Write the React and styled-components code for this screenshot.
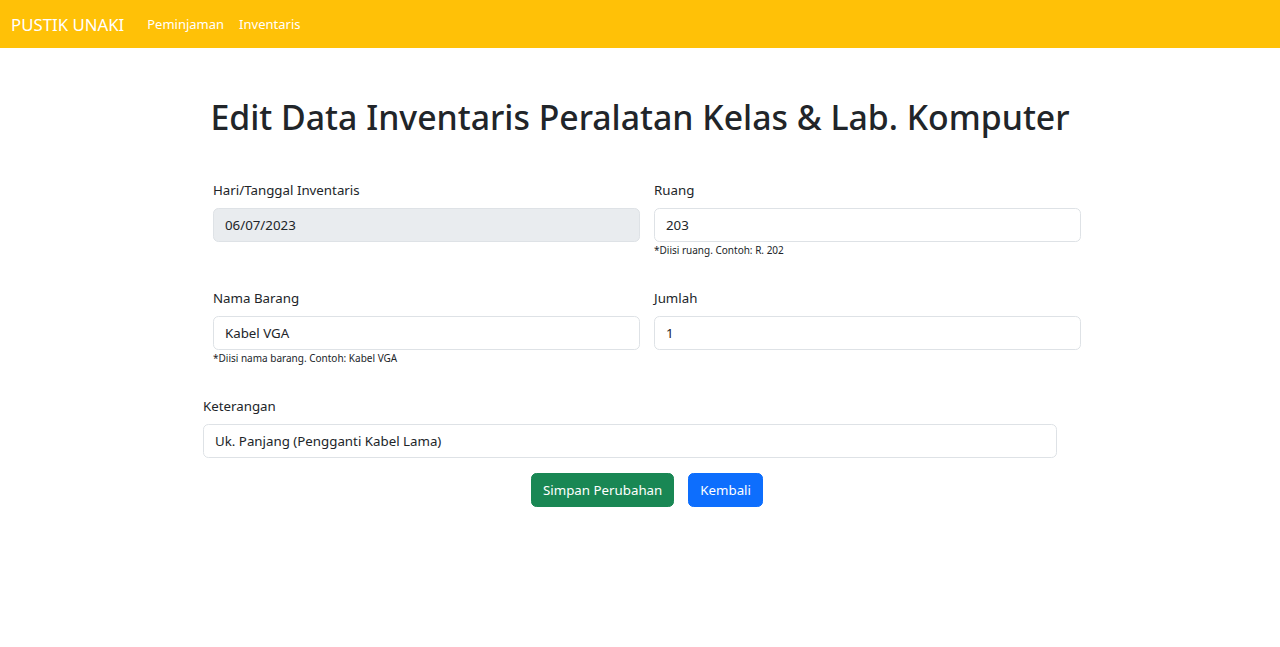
import React from 'react'
import styled, { createGlobalStyle } from 'styled-components'

const GlobalStyle = createGlobalStyle`
  * { box-sizing: border-box; }
  body {
    margin: 0;
    background: #fff;
    color: #212529;
    font-family: "Noto Sans", "Open Sans", sans-serif;
    font-size: 13.3px;
  }
`

const Navbar = styled.nav`
  height: 48px;
  background: #ffc107;
  display: flex;
  align-items: center;
  padding: 0 11px;
`

const Brand = styled.a`
  color: #fff;
  font-size: 16.8px;
  margin-right: 23px;
  text-decoration: none;
`

const NavLink = styled.a`
  color: #fff;
  font-size: 13px;
  margin-right: 15px;
  text-decoration: none;
`

const Title = styled.h1`
  margin: 49px 0 0;
  font-size: 33.8px;
  font-weight: 500;
  line-height: 40px;
  text-align: center;
`

const Form = styled.form`
  width: 878px;
  margin: 43px 0 0 calc(50% - 437px);
`

const Row = styled.div`
  display: grid;
  grid-template-columns: 427px 427px;
  column-gap: 14px;
  padding-left: 10px;
  margin-bottom: 30px;
`

const Group = styled.div`
  display: flex;
  flex-direction: column;
`

const WideGroup = styled(Group)`
  width: 854px;
`

const Label = styled.label`
  line-height: 21px;
  margin-bottom: 7px;
`

const Input = styled.input`
  height: 34px;
  width: 100%;
  padding: 0 11px;
  font: inherit;
  color: #212529;
  background: ${p => (p.disabled ? '#e9ecef' : '#fff')};
  border: 1px solid #dee2e6;
  border-radius: 5.4px;
  outline: none;
`

const Help = styled.small`
  display: block;
  height: 15px;
  margin-top: 1px;
  font-size: 10px;
  line-height: 15px;
`

const Actions = styled.div`
  display: flex;
  justify-content: center;
  gap: 14px;
  padding-left: 10px;
  margin-top: 15px;
`

const Button = styled.button`
  height: 34px;
  padding: 0 11px;
  font: inherit;
  color: #fff;
  background: ${p => p.$bg};
  border: 1px solid ${p => p.$bg};
  border-radius: 5.4px;
`

const Field = ({ label, value, help, disabled }) => (
  <Group>
    <Label>{label}</Label>
    <Input defaultValue={value} disabled={disabled} />
    <Help>{help}</Help>
  </Group>
)

export default function App() {
  return (
    <>
      <GlobalStyle />
      <Navbar>
        <Brand href="#">PUSTIK UNAKI</Brand>
        <NavLink href="#">Peminjaman</NavLink>
        <NavLink href="#">Inventaris</NavLink>
      </Navbar>
      <Title>Edit Data Inventaris Peralatan Kelas &amp; Lab. Komputer</Title>
      <Form onSubmit={e => e.preventDefault()}>
        <Row>
          <Field label="Hari/Tanggal Inventaris" value="06/07/2023" disabled />
          <Field label="Ruang" value="203" help="*Diisi ruang. Contoh: R. 202" />
        </Row>
        <Row>
          <Field label="Nama Barang" value="Kabel VGA" help="*Diisi nama barang. Contoh: Kabel VGA" />
          <Field label="Jumlah" value="1" />
        </Row>
        <WideGroup>
          <Label>Keterangan</Label>
          <Input defaultValue="Uk. Panjang (Pengganti Kabel Lama)" />
        </WideGroup>
        <Actions>
          <Button type="submit" $bg="#198754">Simpan Perubahan</Button>
          <Button type="button" $bg="#0d6efd">Kembali</Button>
        </Actions>
      </Form>
    </>
  )
}
